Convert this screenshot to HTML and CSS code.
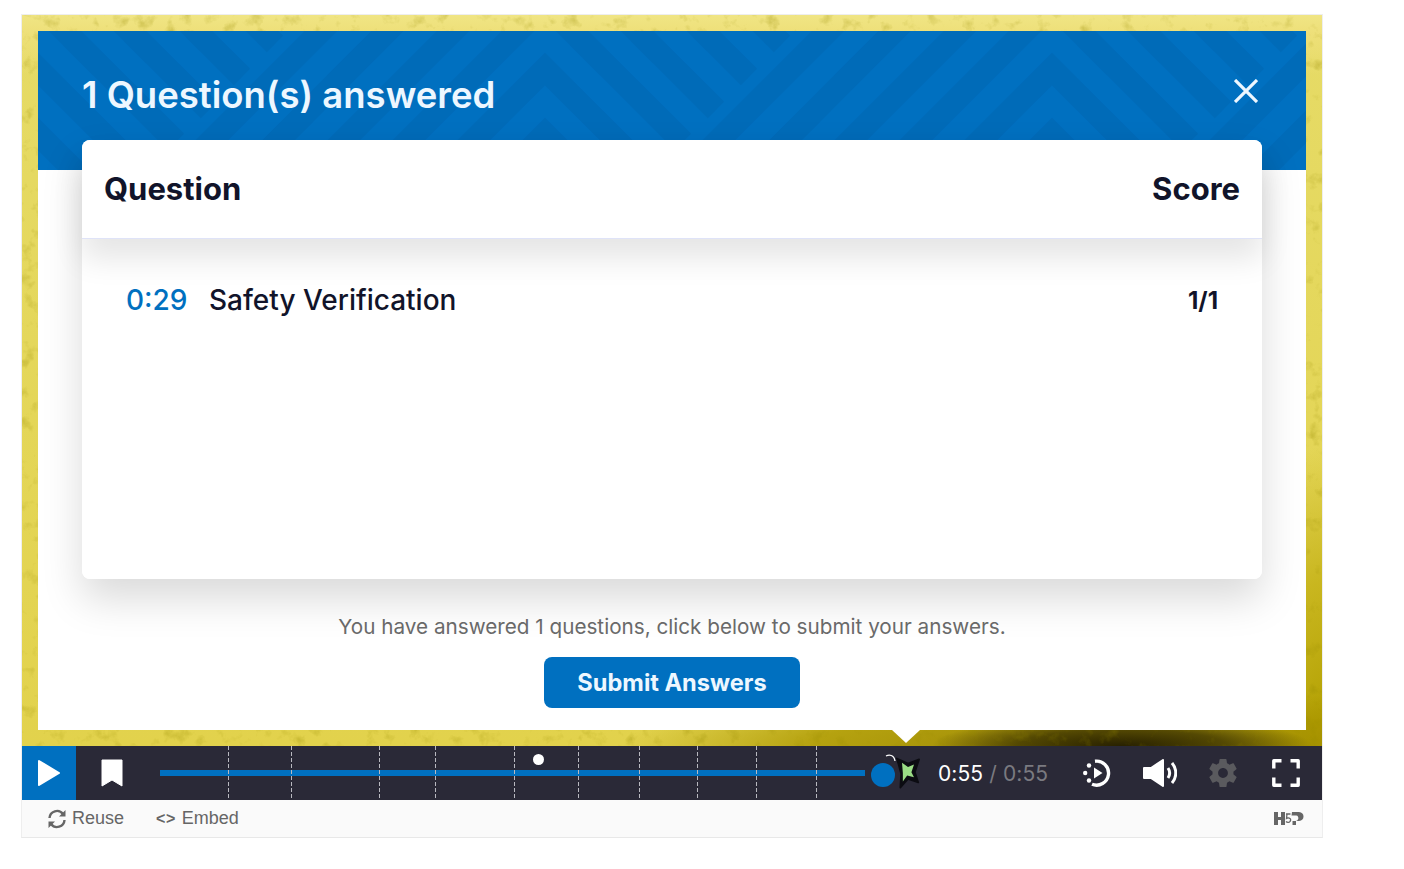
FILE: index.html
```html
<!DOCTYPE html>
<html lang="en">
<head>
<meta charset="utf-8">
<title>Interactive Video</title>
<link rel="stylesheet" href="styles.css">
</head>
<body>
<div class="player">
  <div class="stage">
    <svg class="grain" aria-hidden="true">
      <filter id="paper" x="0" y="0" width="100%" height="100%">
        <feTurbulence type="fractalNoise" baseFrequency="0.07" numOctaves="4" seed="7"/>
        <feColorMatrix values="0 0 0 0 .3  0 0 0 0 .25  0 0 0 0 0  1.6 1.6 0 0 -1.72"/>
      </filter>
      <rect width="100%" height="100%" filter="url(#paper)"/>
    </svg>
    <section class="popup">
      <header class="popup-head">
        <svg class="chevrons" viewBox="0 0 1268 139" aria-hidden="true">
          <defs>
            <g id="tile" fill="none" stroke="#006bb8" stroke-width="23">
              <polyline points="-190,163 0,-27 138,111"/>
              <polyline points="-255,163 0,-92 171,79"/>
              <polyline points="-320,163 0,-158 204,46"/>
              <polyline points="-387,163 0,-224 237,13"/>
              <polyline points="-125,163 0,38 106,144"/>
              <polyline points="-60,163 0,103 60,163"/>
            </g>
          </defs>
          <use href="#tile" x="0"/>
          <use href="#tile" x="507"/>
          <use href="#tile" x="1014"/>
          <use href="#tile" x="1521"/>
        </svg>
        <h1 class="popup-title">1 Question(s) answered</h1>
        <svg class="close" viewBox="0 0 24 24" aria-hidden="true"><path d="M1 1 23 23M23 1 1 23"/></svg>
      </header>
      <div class="card">
        <div class="card-head"><span>Question</span><span>Score</span></div>
        <div class="card-list">
          <div class="row">
            <span class="row-time">0:29</span>
            <span class="row-name">Safety Verification</span>
            <span class="row-score">1/1</span>
          </div>
        </div>
      </div>
      <p class="note">You have answered 1 questions, click below to submit your answers.</p>
      <button class="submit" type="button">Submit Answers</button>
    </section>
  </div>
  <div class="bar">
    <div class="play"><svg class="ico-play" viewBox="0 0 24 28" aria-hidden="true"><path d="M2 2 22 14 2 26Z"/></svg></div>
    <div class="mark"><svg class="ico-mark" viewBox="0 0 22 28" aria-hidden="true"><path d="M1 1H21V27L11 21 1 27Z"/></svg></div>
    <div class="slider">
      <div class="track"></div>
      <i class="tick" style="left:68px"></i>
      <i class="tick" style="left:131px"></i>
      <i class="tick" style="left:219px"></i>
      <i class="tick" style="left:275px"></i>
      <i class="tick" style="left:354px"></i>
      <i class="tick" style="left:418px"></i>
      <i class="tick" style="left:479px"></i>
      <i class="tick" style="left:537px"></i>
      <i class="tick" style="left:596px"></i>
      <i class="tick" style="left:656px"></i>
      <i class="dot"></i>
      <svg class="arc" viewBox="0 0 12 8" aria-hidden="true"><path d="M1 2C4 .5 9 .5 10 7"/></svg>
      <i class="thumb"></i>
      <svg class="star" viewBox="0 0 28 36" aria-hidden="true"><path class="star-out" d="M1 1 14 7 27 2 22 17 26 29 14 25 5 35 6 19Z"/><path class="star-in" d="M7 6 14 11 21 8 18 17 21 23 13 21 8 28 8 18Z"/></svg>
    </div>
    <div class="time"><span class="time-now">0:55</span><span class="time-all"> / 0:55</span></div>
    <div class="tools">
      <svg class="ico-replay" viewBox="0 0 28 28" aria-hidden="true">
        <path class="ln" d="M12 2.200A12 12 0 1 1 9 25.200"/>
        <path class="fl" d="M11 8.500 19.500 14 11 19.500Z"/>
        <circle class="fl" cx="6" cy="6.500" r="2.200"/><circle class="fl" cx="2.200" cy="14" r="2.200"/><circle class="fl" cx="6" cy="21.500" r="2.200"/>
      </svg>
      <svg class="ico-vol" viewBox="0 0 34 28" aria-hidden="true">
        <path class="vol-body" d="M1 9H8L20 1V27L8 19H1Z"/>
        <path class="ln2" d="M25 9C27 12 27 16 25 19M29 4C34 10 34 18 29 24"/>
      </svg>
      <svg class="ico-gear" viewBox="2 2 20 20" aria-hidden="true"><path d="M19.430 12.980c.04-.32.07-.64.07-.98s-.03-.66-.07-.98l2.110-1.650c.19-.15.24-.42.12-.64l-2-3.460c-.12-.22-.39-.3-.61-.22l-2.490 1c-.52-.4-1.080-.73-1.690-.98l-.38-2.650C14.460 2.180 14.250 2 14 2h-4c-.25 0-.46.18-.49.42l-.38 2.650c-.61.25-1.170.59-1.690.98l-2.490-1c-.23-.09-.49 0-.61.22l-2 3.460c-.13.22-.07.49.12.64l2.110 1.650c-.04.32-.07.65-.07.98s.03.66.07.98l-2.110 1.650c-.19.15-.24.42-.12.64l2 3.460c.12.22.39.3.61.22l2.490-1c.52.4 1.080.73 1.690.98l.38 2.650c.03.24.24.42.49.42h4c.25 0 .46-.18.49-.42l.38-2.650c.61-.25 1.170-.59 1.690-.98l2.490 1c.23.09.49 0 .61-.22l2-3.460c.12-.22.07-.49-.12-.64l-2.110-1.650zM12 15.500c-1.930 0-3.500-1.570-3.500-3.500s1.570-3.500 3.500-3.500 3.500 1.570 3.500 3.500-1.570 3.500-3.500 3.500z"/></svg>
      <svg class="ico-full" viewBox="0 0 28 28" aria-hidden="true"><path d="M1.800 9.500V1.800H9.500M18.500 1.800H26.200V9.500M26.200 18.500V26.200H18.500M9.500 26.200H1.800V18.500"/></svg>
    </div>
  </div>
  <footer class="actions">
    <span class="action"><svg class="ico-reuse" viewBox="0 0 20 20" aria-hidden="true"><path class="arc-line" d="M2.500 9A7.500 7.500 0 0 1 16 5M17.500 11A7.500 7.500 0 0 1 4 15"/><path class="arc-fill" d="M18.500 1V7.500H12ZM1.500 19V12.500H8Z"/></svg>Reuse</span>
    <span class="action action-embed"><span class="code">&lt;&gt;</span>Embed</span>
    <svg class="logo" viewBox="0 0 30 15" aria-hidden="true">
      <path d="M0 1H4V6H7V1H11V14H7V9H4V14H0ZM18 1H25C31 1 31 10 25 10H22V14H18.500V10H21.500C24 10 25 7 24 6C24 4.500 23 4.500 21 4.500H17.500Z"/>
      <path class="logo-five" d="M12 3H16.500M13 3 12.500 7.500C15 6 18 8 16 10.500 15 12 13 11.500 12 10.500"/>
    </svg>
  </footer>
</div>
</body>
</html>
```
FILE: styles.css
```css
* { box-sizing: border-box; }

html, body { background: #fff; }

body {
  margin: 0;
  padding: 14px 0 0 21px;
  font-family: Inter, "Noto Sans", sans-serif;
}

.player {
  width: 1302px;
  border: 1px solid #eeeeee;
  border-bottom-color: #e8e8e8;
}

.stage {
  position: relative;
  height: 731px;
  padding: 16px;
  background:
    radial-gradient(ellipse 190px 30px at 1100px 731px, rgba(30, 24, 0, .92), rgba(50, 42, 0, .7) 55%, rgba(60, 50, 0, 0) 100%),
    radial-gradient(ellipse 480px 60px at 1080px 731px, rgba(150, 130, 0, .95), rgba(170, 150, 0, .8) 60%, rgba(190, 170, 0, 0) 100%),
    radial-gradient(ellipse 90px 300px at 1300px 731px, rgba(176, 158, 0, 1), rgba(190, 170, 10, .7) 55%, rgba(200, 180, 20, 0) 100%),
    linear-gradient(180deg, #f0e584 0, #eee07a 16px, rgba(227, 213, 80, 0) 60px),
    linear-gradient(180deg, #e6db67 0, #e2d24c 100%);
}

.grain {
  position: absolute;
  top: 0;
  left: 0;
  width: 100%;
  height: 100%;
  opacity: .4;
}

.popup {
  position: relative;
  display: flex;
  flex-direction: column;
  align-items: center;
  height: 699px;
  background: #fff;
}

.popup::after {
  content: "";
  position: absolute;
  left: 854px;
  top: 699px;
  border-style: solid;
  border-width: 13px 14px 0;
  border-color: #fff transparent transparent;
}

.popup-head {
  position: relative;
  align-self: stretch;
  display: flex;
  height: 139px;
  padding: 41px 44px 0;
  background: #0070c0;
  overflow: hidden;
}

.chevrons {
  position: absolute;
  top: 0;
  left: 0;
  width: 1268px;
  height: 139px;
}

.popup-title {
  position: relative;
  margin: 0;
  font-size: 36.500px;
  line-height: 46px;
  font-weight: 600;
  color: #edf7ff;
}

.close {
  position: absolute;
  top: 48px;
  left: 1196px;
  width: 24px;
  height: 24px;
  fill: none;
  stroke: #edf7ff;
  stroke-width: 3.200;
}

.card {
  position: relative;
  align-self: stretch;
  display: flex;
  flex-direction: column;
  height: 439px;
  margin: -30px 44px 0;
  background: #fff;
  border-radius: 8px;
  box-shadow: 0 20px 40px rgba(0, 0, 0, .15);
}

.card-head {
  position: relative;
  z-index: 1;
  display: flex;
  justify-content: space-between;
  align-items: center;
  height: 99px;
  padding: 0 22px 2px;
  background: #fff;
  border-radius: 8px 8px 0 0;
  border-bottom: 1px solid #dfe3f8;
  box-shadow: 0 20px 30px rgba(0, 0, 0, .1);
  font-size: 31px;
  font-weight: 700;
  color: #11142a;
}

.card-list {
  flex: 1;
  padding: 39px 44px 0;
  background: #fff;
  border-radius: 0 0 8px 8px;
}

.row {
  display: flex;
  align-items: center;
  height: 44px;
  color: #11142a;
  font-size: 28px;
  font-weight: 500;
}

.row-time {
  width: 83px;
  color: #0070c0;
}

.row-name { flex: 1; }

.row-score {
  font-size: 24px;
  font-weight: 700;
}

.note {
  margin: 35px 0 0;
  font-size: 20.700px;
  line-height: 25px;
  color: #6b6b6b;
}

.submit {
  width: 256px;
  height: 51px;
  margin-top: 18px;
  border: 0;
  border-radius: 8px;
  background: #0070c0;
  color: #edf7ff;
  font: 700 23.600px Inter, "Noto Sans", sans-serif;
}

.bar {
  display: flex;
  align-items: center;
  height: 54px;
  background: #2a2937;
}

.play {
  display: flex;
  align-items: center;
  justify-content: center;
  flex: none;
  width: 54px;
  height: 54px;
  background: #0070c0;
}

.ico-play {
  width: 24px;
  height: 28px;
  fill: #fff;
  stroke: #fff;
  stroke-width: 2;
  stroke-linejoin: round;
}

.mark {
  display: flex;
  justify-content: center;
  flex: none;
  width: 72px;
}

.ico-mark {
  width: 22px;
  height: 28px;
  fill: #fff;
  stroke: #fff;
  stroke-linejoin: round;
}

.slider {
  position: relative;
  flex: none;
  width: 764px;
  height: 54px;
  margin-left: 12px;
}

.track {
  position: absolute;
  top: 24px;
  left: 0;
  width: 705px;
  height: 6px;
  background: #0070c0;
}

.tick {
  position: absolute;
  top: 0;
  bottom: 0;
  width: 1px;
  background: repeating-linear-gradient(180deg, #b9b9c0 0, #b9b9c0 4px, transparent 4px, transparent 6px);
}

.dot {
  position: absolute;
  top: 8px;
  left: 373px;
  width: 11px;
  height: 11px;
  border-radius: 50%;
  background: #fff;
}

.arc {
  position: absolute;
  top: 8px;
  left: 725px;
  width: 12px;
  height: 8px;
  fill: none;
  stroke: #fff;
  stroke-width: 1.300;
}

.thumb {
  position: absolute;
  top: 17px;
  left: 711px;
  width: 24px;
  height: 24px;
  border-radius: 50%;
  background: #0070c0;
}

.star {
  position: absolute;
  top: 9px;
  left: 736px;
  width: 24px;
  height: 36px;
}

.star-out { fill: #0c0c12; stroke: #0c0c12; stroke-width: 2; stroke-linejoin: round; }
.star-in { fill: #9bdd86; }

.time {
  flex: none;
  margin-left: 14px;
  font-size: 21px;
  letter-spacing: .1px;
  white-space: pre;
}

.time-now { color: #fff; }
.time-all { color: #7a7a80; }

.tools {
  display: flex;
  align-items: center;
  gap: 32px;
  margin-left: auto;
  padding-right: 22px;
}

.tools svg { display: block; flex: none; width: 28px; height: 28px; }

.tools .ico-vol { width: 34px; }

.fl { fill: #fff; }

.vol-body { fill: #fff; stroke: #fff; stroke-width: 2; stroke-linejoin: round; }

.ln, .ln2 { fill: none; stroke: #fff; }
.ln { stroke-width: 3.400; }
.ln2 { stroke-width: 3; }

.ico-gear { fill: #5a5a5e; }

.ico-full {
  margin-left: 3px;
  fill: none;
  stroke: #fff;
  stroke-width: 3.400;
  stroke-linejoin: round;
}

.actions {
  display: flex;
  align-items: center;
  height: 37px;
  padding: 0 18px 0 25px;
  background: #fafafa;
  font-family: "Liberation Sans", Arial, sans-serif;
  font-size: 18px;
  color: #666;
}

.action { display: flex; align-items: center; }

.action-embed { margin-left: 32px; }

.ico-reuse { width: 20px; height: 20px; margin-right: 5px; }

.arc-line { fill: none; stroke: #666; stroke-width: 2.400; }
.arc-fill { fill: #666; }

.code {
  margin-right: 6px;
  font-size: 16px;
  font-weight: 700;
  letter-spacing: .5px;
}

.logo {
  width: 30px;
  height: 15px;
  margin-left: auto;
  fill: #666;
}

.logo-five { fill: none; stroke: #666; stroke-width: 1.300; }
```
